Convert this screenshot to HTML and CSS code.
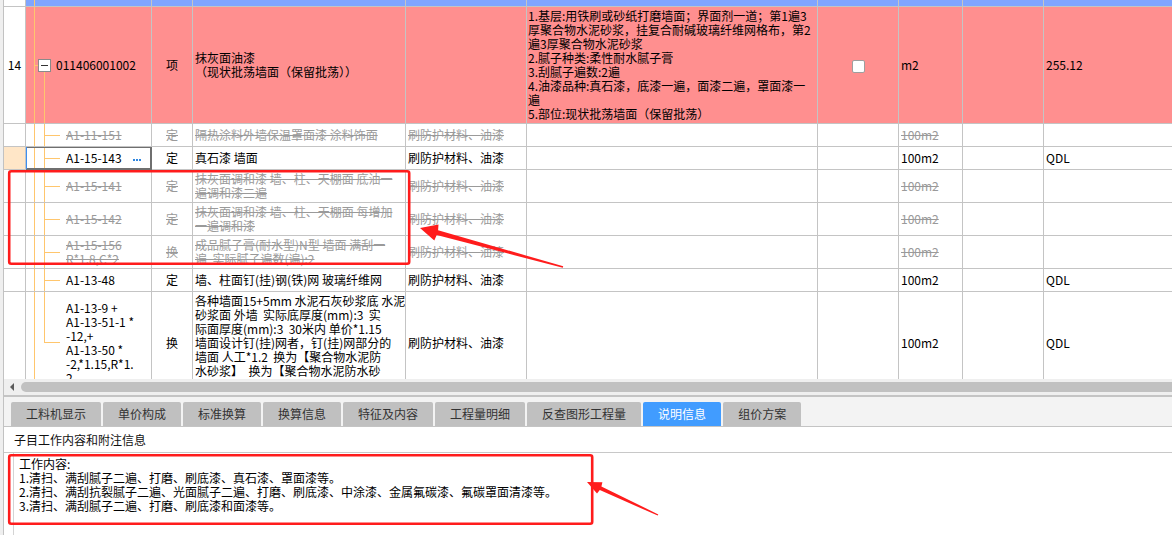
FILE: index.html
```html
<!DOCTYPE html>
<html lang="zh-CN">
<head>
    <meta charset="UTF-8">
    <title>说明信息</title>
    <link rel="stylesheet" href="styles.css">
</head>
<body>
    <div class="app">
        <div class="grid-wrap">
            <table class="grid">
                <colgroup>
                    <col class="c-num">
                    <col class="c-code">
                    <col class="c-type">
                    <col class="c-name">
                    <col class="c-work">
                    <col class="c-feat">
                    <col class="c-check">
                    <col class="c-unit">
                    <col class="c-expr">
                    <col class="c-qty">
                </colgroup>
                <tr class="r-top">
                    <td class="num"></td><td class="code tree-top"></td><td></td><td></td><td></td>
                    <td></td><td></td><td></td><td></td><td></td>
                </tr>
                <tr class="r-bill">
                    <td class="num">14</td>
                    <td class="code tree-bill"><span class="fold"></span>011406001002</td>
                    <td class="type">项</td>
                    <td class="name">抹灰面油漆<br>（现状批荡墙面（保留批荡））</td>
                    <td></td>
                    <td class="feat">1.基层:用铁刷或砂纸打磨墙面；界面剂一道；第1遍3<br>厚聚合物水泥砂浆，挂复合耐碱玻璃纤维网格布，第2<br>遍3厚聚合物水泥砂浆<br>2.腻子种类:柔性耐水腻子膏<br>3.刮腻子遍数:2遍<br>4.油漆品种:真石漆，底漆一遍，面漆二遍，罩面漆一<br>遍<br>5.部位:现状批荡墙面（保留批荡）</td>
                    <td class="check"><span class="box"></span></td>
                    <td>m2</td>
                    <td></td>
                    <td>255.12</td>
                </tr>
                <tr class="r-s1 del">
                    <td class="num"></td>
                    <td class="code tree"><s>A1-11-151</s></td>
                    <td class="type"><s>定</s></td>
                    <td><s>隔热涂料外墙保温罩面漆 涂料饰面</s></td>
                    <td><s>刷防护材料、油漆</s></td>
                    <td></td><td></td>
                    <td><s>100m2</s></td>
                    <td></td><td></td>
                </tr>
                <tr class="r-s1 sel">
                    <td class="num"></td>
                    <td class="code tree">A1-15-143<span class="more"></span></td>
                    <td class="type">定</td>
                    <td>真石漆 墙面</td>
                    <td>刷防护材料、油漆</td>
                    <td></td><td></td>
                    <td>100m2</td>
                    <td></td>
                    <td>QDL</td>
                </tr>
                <tr class="r-s2 del">
                    <td class="num"></td>
                    <td class="code tree"><s>A1-15-141</s></td>
                    <td class="type"><s>定</s></td>
                    <td><s>抹灰面调和漆 墙、柱、天棚面 底油一</s><br><s>遍调和漆二遍</s></td>
                    <td><s>刷防护材料、油漆</s></td>
                    <td></td><td></td>
                    <td><s>100m2</s></td>
                    <td></td><td></td>
                </tr>
                <tr class="r-s2 del">
                    <td class="num"></td>
                    <td class="code tree"><s>A1-15-142</s></td>
                    <td class="type"><s>定</s></td>
                    <td><s>抹灰面调和漆 墙、柱、天棚面 每增加</s><br><s>一遍调和漆</s></td>
                    <td><s>刷防护材料、油漆</s></td>
                    <td></td><td></td>
                    <td><s>100m2</s></td>
                    <td></td><td></td>
                </tr>
                <tr class="r-s2 del">
                    <td class="num"></td>
                    <td class="code tree"><s>A1-15-156</s><br><s>R*1.8,C*2</s></td>
                    <td class="type"><s>换</s></td>
                    <td><s>成品腻子膏(耐水型)N型 墙面 满刮一</s><br><s>遍&nbsp; 实际腻子遍数(遍):2</s></td>
                    <td><s>刷防护材料、油漆</s></td>
                    <td></td><td></td>
                    <td><s>100m2</s></td>
                    <td></td><td></td>
                </tr>
                <tr class="r-s1">
                    <td class="num"></td>
                    <td class="code tree">A1-13-48</td>
                    <td class="type">定</td>
                    <td>墙、柱面钉(挂)钢(铁)网 玻璃纤维网</td>
                    <td>刷防护材料、油漆</td>
                    <td></td><td></td>
                    <td>100m2</td>
                    <td></td>
                    <td>QDL</td>
                </tr>
                <tr class="r-big">
                    <td class="num"></td>
                    <td class="code tree-last">A1-13-9 +<br>A1-13-51-1 *<br>-12,+<br>A1-13-50 *<br>-2,*1.15,R*1.<br>2</td>
                    <td class="type">换</td>
                    <td>各种墙面15+5mm 水泥石灰砂浆底 水泥<br>砂浆面 外墙&nbsp; 实际底厚度(mm):3&nbsp; 实<br>际面厚度(mm):3&nbsp; 30米内 单价*1.15<br>墙面设计钉(挂)网者，钉(挂)网部分的<br>墙面 人工*1.2&nbsp; 换为【聚合物水泥防<br>水砂浆】&nbsp; 换为【聚合物水泥防水砂<br>浆】</td>
                    <td>刷防护材料、油漆</td>
                    <td></td><td></td>
                    <td>100m2</td>
                    <td></td>
                    <td>QDL</td>
                </tr>
            </table>
        </div>

        <div class="hscroll">
            <span class="scroll-left"></span>
            <div class="thumb"></div>
        </div>

        <div class="tabs">
            <span class="tab">工料机显示</span>
            <span class="tab">单价构成</span>
            <span class="tab">标准换算</span>
            <span class="tab">换算信息</span>
            <span class="tab">特征及内容</span>
            <span class="tab">工程量明细</span>
            <span class="tab">反查图形工程量</span>
            <span class="tab active">说明信息</span>
            <span class="tab">组价方案</span>
        </div>

        <div class="info-title">子目工作内容和附注信息</div>
        <div class="info-body">
            工作内容:<br>
            1.清扫、满刮腻子二遍、打磨、刷底漆、真石漆、罩面漆等。<br>
            2.清扫、满刮抗裂腻子二遍、光面腻子二遍、打磨、刷底漆、中涂漆、金属氟碳漆、氟碳罩面清漆等。<br>
            3.清扫、满刮腻子二遍、打磨、刷底漆和面漆等。
        </div>
    </div>

    <svg class="marks" width="1172" height="535" viewBox="0 0 1172 535">
        <rect x="9.2" y="171.2" width="400" height="92.6" rx="2" class="mark-box"/>
        <rect x="9.2" y="455.2" width="583" height="68.6" rx="2" class="mark-box"/>
        <polygon class="mark-arrow" points="420,228 438.5,224.6 438.1,230.3 563.2,266.2 562.8,267.8 436.7,235.1 434.3,240.4"/>
        <polygon class="mark-arrow" points="587,482 602.4,482.3 601.4,486.5 658.3,514.4 657.7,515.6 599.8,490.1 597.0,493.4"/>
    </svg>
</body>
</html>
```

FILE: styles.css
```css
body {
    margin: 0;
    width: 1172px;
    height: 535px;
    overflow: hidden;
    position: relative;
    background-color: #efefef;
    font-family: "Noto Sans CJK SC", sans-serif;
}
.app {
    margin-left: 3px;
    height: 535px;
    border-left: 1px solid #c2c2c2;
    background-color: #fff;
    overflow: hidden;
}

/* grid */
.grid-wrap {
    height: 379px;
    overflow: hidden;
}
.grid {
    table-layout: fixed;
    width: 1246px;
    border-collapse: separate;
    border-spacing: 0;
    font-size: 12px;
    line-height: 14px;
    color: #000;
}
.c-num { width: 22px; }
.c-code { width: 126px; }
.c-type { width: 41px; }
.c-name { width: 213px; }
.c-work { width: 121px; }
.c-feat { width: 291px; }
.c-check { width: 81px; }
.c-unit { width: 64px; }
.c-expr { width: 81px; }
.c-qty { width: 206px; }
.grid td {
    box-sizing: border-box;
    border-right: 1px solid #c4c4c4;
    border-bottom: 1px solid #c4c4c4;
    padding: 0 2px;
    vertical-align: middle;
    white-space: nowrap;
    overflow: hidden;
}
.grid td.num {
    text-align: center;
    padding: 0;
    background-color: #fff;
}
.grid td.type {
    text-align: center;
}
.grid td.feat {
    padding-left: 1px;
}
.grid td.code {
    padding-left: 40px;
}
.grid s {
    text-decoration: line-through;
}
.del td {
    color: #9a9a9a;
}

.r-top td { height: 7px; font-size: 0; line-height: 0; background-color: #80a5ff; }
.r-bill td { height: 117px; background-color: #ff8f8f; }
.r-s1 td { height: 23px; }
.r-s2 td { height: 33px; }
.r-big td { height: 102px; }

/* tree connector lines */
.tree,
.tree-top,
.tree-bill,
.tree-last {
    background-repeat: no-repeat;
}
.tree {
    background-image: linear-gradient(#ffc66d, #ffc66d), linear-gradient(#ffc66d, #ffc66d), linear-gradient(#ffc66d, #ffc66d);
    background-size: 1px 100%, 1px 100%, 16px 1px;
    background-position: 8px 0, 18px 0, 18px 50%;
}
.tree-last {
    background-image: linear-gradient(#ffc66d, #ffc66d), linear-gradient(#ffc66d, #ffc66d), linear-gradient(#ffc66d, #ffc66d);
    background-size: 1px 100%, 1px 50%, 16px 1px;
    background-position: 8px 0, 18px 0, 18px 50%;
}
.r-top .tree-top {
    background-image: linear-gradient(#ffc66d, #ffc66d);
    background-size: 1px 100%;
    background-position: 8px 0;
}
.grid td.tree-bill {
    padding-left: 12px;
    background-image: linear-gradient(#ffc66d, #ffc66d), linear-gradient(#ffc66d, #ffc66d), linear-gradient(#ffc66d, #ffc66d);
    background-size: 1px 100%, 4px 1px, 1px 50%;
    background-position: 8px 0, 8px 50%, 18px 100%;
}
.fold {
    display: inline-block;
    box-sizing: border-box;
    width: 13px;
    height: 13px;
    margin-right: 5px;
    vertical-align: -2px;
    border: 1px solid #8a8a8a;
    background: #fff linear-gradient(#333, #333) no-repeat center / 7px 1px;
}
.more {
    display: inline-block;
    width: 8px;
    height: 2px;
    margin-left: 11px;
    vertical-align: middle;
    background-image: linear-gradient(to right, #2f86e0 2px, transparent 2px);
    background-size: 3px 2px;
}
.sel .num {
    background-color: #ffe6c7 !important;
}
.sel .code {
    border-right-color: #6f6f6f !important;
    border-bottom-color: #6f6f6f !important;
    box-shadow: inset 1px 0 0 #3d8ef0, inset 0 0 0 1px #6f6f6f;
}
.check {
    text-align: center;
}
.box {
    display: inline-block;
    width: 11px;
    height: 11px;
    vertical-align: middle;
    border: 1px solid #9e9e9e;
    border-radius: 2px;
    background-color: #fff;
}

/* horizontal scrollbar */
.hscroll {
    display: flex;
    align-items: center;
    height: 16px;
    padding-left: 6px;
    gap: 7px;
    background-color: #efefef;
    border-bottom: 2px solid #c4c4c4;
}
.scroll-left {
    width: 0;
    height: 0;
    border-top: 4px solid transparent;
    border-bottom: 4px solid transparent;
    border-right: 4px solid #5c5c5c;
}
.thumb {
    flex: 1;
    height: 10px;
    border-radius: 5px 0 0 5px;
    background-color: #c1c1c1;
}

/* tabs */
.tabs {
    display: flex;
    gap: 2px;
    height: 24px;
    padding: 5px 0 0 7px;
    background-color: #f3f3f3;
    border-bottom: 1px solid #c4c4c4;
}
.tab {
    height: 24px;
    padding: 0 15px;
    font-size: 12px;
    line-height: 24px;
    color: #333;
    background-color: #c0c0c0;
    border-radius: 2px 2px 0 0;
}
.tab.active {
    color: #fff;
    background-color: #419cff;
}

/* info panel */
.info-title {
    height: 25px;
    padding-left: 10px;
    font-size: 12px;
    line-height: 25px;
    color: #111;
    border-bottom: 1px solid #c8c8c8;
}
.info-body {
    margin-left: 9px;
    height: 100px;
    padding: 4px 0 0 5px;
    border-left: 1px solid #d4d4d4;
    font-size: 12px;
    line-height: 14px;
    color: #000;
}

/* red annotations laid over the screenshot */
.marks {
    position: absolute;
    top: 0;
    left: 0;
    pointer-events: none;
}
.mark-box {
    fill: none;
    stroke: #ff1c1c;
    stroke-width: 2.6;
}
.mark-arrow {
    fill: #ff1c1c;
}
```
